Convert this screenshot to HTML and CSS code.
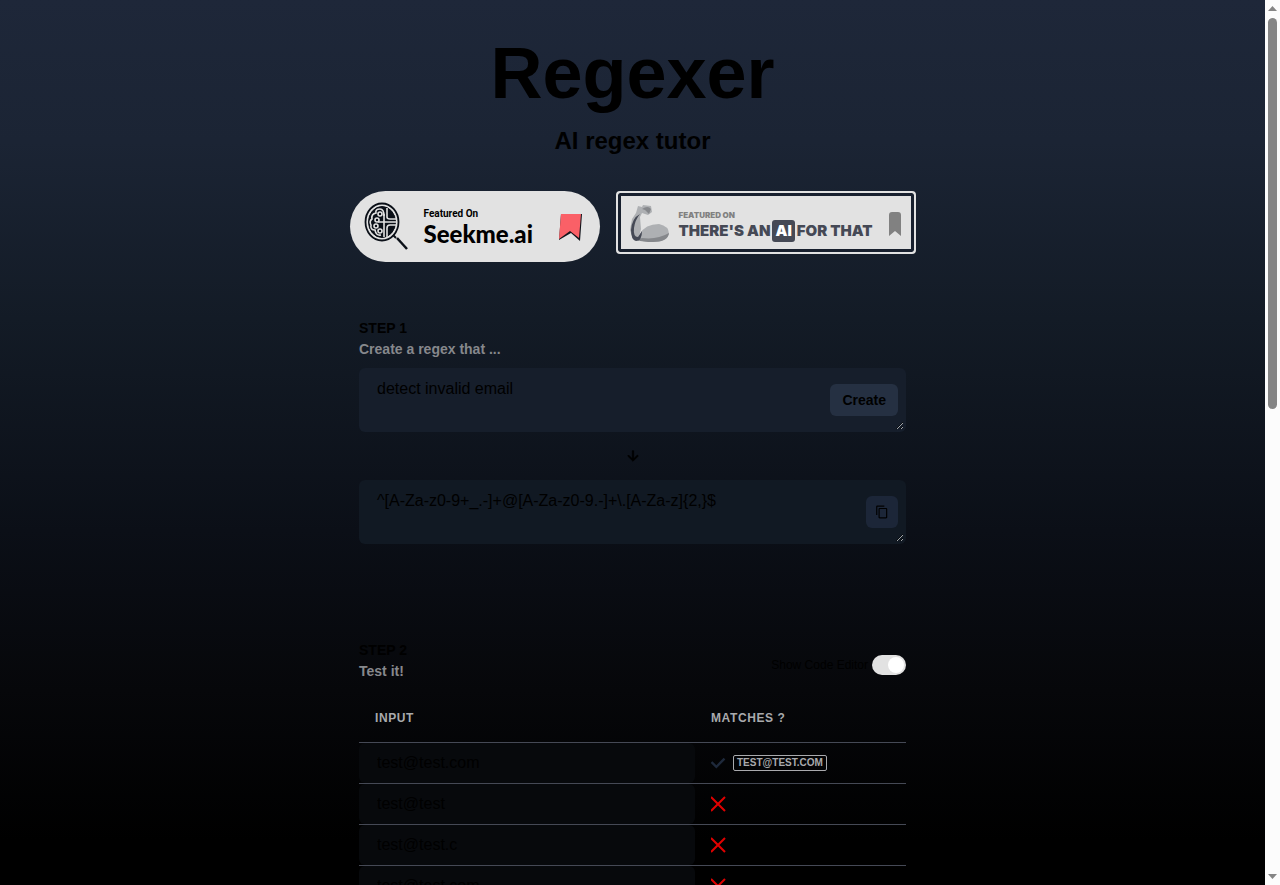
FILE: index.html
```html
<!DOCTYPE html>
<html lang="en">
<head>
<meta charset="utf-8">
<title>Regexer</title>
<meta name="viewport" content="width=device-width, initial-scale=1">
<link rel="stylesheet" href="styles.css">
</head>
<body>
<div class="page">
<header class="header">
    <h1>Regexer</h1>
    <h2>AI regex tutor</h2>
    <div class="badges">
        <a href="#seekme" class="badge-seekme">
            <svg class="magnifier" width="46" height="50" viewBox="0 0 46 50" fill="none" stroke="#0b1018">
                <ellipse cx="18" cy="20" rx="16.500" ry="18.500" stroke-width="1.800"/>
                <ellipse cx="18" cy="20" rx="13.500" ry="15.500" stroke-width="1" fill="#0b1018"/>
                <g stroke="#e2e2e2" stroke-width="1.600">
                    <path d="M20 12v23M23 6v9q0 2 3 2h6M23 35v-9q0-3 3-3h6M14 20h18"/>
                    <path d="M20 14q0-7-4-7-5 0-4 4-5 1-4 6-3 2-1 6-1 5 4 5 1 6 6 5"/>
                    <circle cx="16" cy="12" r="2"/>
                    <circle cx="13" cy="18" r="2"/>
                    <circle cx="12" cy="24" r="2"/>
                    <circle cx="16" cy="29" r="2"/>
                </g>
                <path d="M29 33l3 3" stroke-width="2"/>
                <path d="M33 36l10 11" stroke-width="2.500"/>
            </svg>
            <span class="badge-text">
                <small>Featured On</small>
                <b>Seekme.ai</b>
            </span>
            <svg width="24" height="28" viewBox="0 0 24 28">
                <path d="M3 1h21l-2 27-9-8-12 7z" fill="#12151c"/>
                <path d="M3 1h20l-2 24-9-7-11 8z" fill="#fa6067"/>
            </svg>
        </a>
        <a href="#taaft" class="badge-taaft">
            <svg class="arm" width="40" height="40" viewBox="0 0 40 40">
                <path d="M8 2l4 1 1-2 8 1 1 6-4 3-6-2-2 4 1 12-2 8-6 2-3-9 2-11 4-6z" fill="#aeb0b3"/>
                <path d="M12 5q6-4 9 0l-2 5-4-4z" fill="#85878b"/>
                <path d="M10 30q5-10 19-10 10 2 10 10-3 8-17 8-9 0-15-3z" fill="#aeb0b3"/>
                <path d="M12 34q15 2 27-5-1 9-16 9-10 0-16-2z" fill="#85878b"/>
                <path d="M10 10Q2 14 1 26q0 10 5 11 6 0 6-10l-4 6q-5 0-4-9 1-8 6-14z" fill="#454955"/>
            </svg>
            <span class="badge-text">
                <small>FEATURED ON</small>
                <b>THERE'S AN<i>AI</i>FOR THAT</b>
            </span>
            <svg width="12" height="24" viewBox="0 0 12 24">
                <path d="M0 3q0-3 3-3h6q3 0 3 3v21l-6-5-6 5z" fill="#818181"/>
            </svg>
        </a>
    </div>
</header>

<main class="content">
    <section class="step-create">
        <h3>STEP 1</h3>
        <label class="subtitle" for="prompt">Create a regex that ...</label>
        <div class="field">
            <textarea id="prompt" spellcheck="false">detect invalid email</textarea>
            <button type="button">Create</button>
        </div>
        <svg class="arrow" width="16" height="16" viewBox="0 0 24 24" fill="#000" stroke="#000">
            <path d="M20 12l-1.410-1.410L13 16.170V4h-2v12.170l-5.580-5.590L4 12l8 8 8-8z"/>
        </svg>
        <div class="field result">
            <textarea aria-label="Regex" spellcheck="false">^[A-Za-z0-9+_.-]+@[A-Za-z0-9.-]+\.[A-Za-z]{2,}$</textarea>
            <button type="button" class="copy" aria-label="Copy">
                <svg width="14" height="14" viewBox="0 0 24 24" fill="#000">
                    <path d="M16 1H4c-1.100 0-2 .9-2 2v14h2V3h12V1zm3 4H8c-1.100 0-2 .9-2 2v14c0 1.100.9 2 2 2h11c1.100 0 2-.9 2-2V7c0-1.100-.9-2-2-2zm0 16H8V7h11v14z"/>
                </svg>
            </button>
        </div>
    </section>

    <section class="step-test">
        <div class="step-head">
            <div>
                <h3>STEP 2</h3>
                <p class="subtitle">Test it!</p>
            </div>
            <div class="toggle">
                <label for="editor">Show Code Editor</label>
                <input type="checkbox" id="editor" checked>
            </div>
        </div>
        <table>
            <thead>
                <tr><th>INPUT</th><th>MATCHES ?</th></tr>
            </thead>
            <tbody id="tests"></tbody>
        </table>
    </section>
</main>
</div>

<div class="scrollbar" aria-hidden="true">
    <svg width="9" height="5" viewBox="0 0 9 5" fill="#858585"><path d="M0 5L4.500 0 9 5z"/></svg>
    <div class="track"><div class="thumb"></div></div>
    <svg width="9" height="5" viewBox="0 0 9 5" fill="#858585"><path d="M0 0l4.500 5L9 0z"/></svg>
</div>

<script>
    var tests = [
        { value: "test@test.com", match: "TEST@TEST.COM" },
        { value: "test@test" },
        { value: "test@test.c" },
        { value: "test@test,com" }
    ];

    var check = '<svg width="16" height="16" viewBox="0 0 24 24" fill="#1e293b"><path d="M8 15.200L2 9.200-.5 11.700 8 20.200 21.500 6.700 19 4.200z"/></svg>';
    var cross = '<svg width="16" height="16" viewBox="0 0 16 16" stroke="#e00000" stroke-width="2"><path d="M0 1l14 14M14 1L0 15"/></svg>';

    document.getElementById("tests").innerHTML = tests.map(function (t) {
        var result = t.match ? check + '<span class="tag">' + t.match + '</span>' : cross;
        return '<tr><td><input type="text" aria-label="Test input" value="' + t.value + '"></td>' +
            '<td><div class="result-cell">' + result + '</div></td></tr>';
    }).join("");
</script>
</body>
</html>
```
FILE: styles.css
```css
* { box-sizing: border-box; }
body { display: flex; height: 100vh; margin: 0; background: #000; font-family: "Liberation Sans", Arial, sans-serif; font-size: 16px; color: #000; }
h1, h2, h3, p { margin: 0; }
a { text-decoration: none; }
svg { display: block; flex: none; }

.page { flex: 1; min-width: 0; overflow-y: auto; background: linear-gradient(#1e2739, #1b2434 16vh, #131b26 36vh, #0b0f17 60vh, #06070a 78vh, #000 95vh); }
.header { padding-top: 37px; text-align: center; }
h1 { font-size: 72px; line-height: 72px; }
h2 { margin-top: 16px; font-size: 24px; line-height: 32px; }

.badges { display: flex; justify-content: center; align-items: flex-start; gap: 16px; margin-top: 34px; text-align: left; }
.badge-seekme { display: flex; align-items: center; width: 250px; height: 71px; padding: 0 18px 0 14px; border-radius: 36px; background: #e2e2e2; color: #000; }
.badge-text { flex: 1; }
.badge-text small, .badge-text b { display: block; white-space: nowrap; }
.badge-seekme .badge-text { padding-left: 14px; }
.badge-seekme small { font: bold 10px/14px Roboto, sans-serif; }
.badge-seekme b { font: 900 24px/26px Lato, sans-serif; }
.badge-taaft { display: flex; align-items: center; width: 300px; height: 63px; padding: 2px 13px 0 12px; border: 2px solid #e2e2e2; border-radius: 4px; background: #e2e2e2; box-shadow: inset 0 0 0 3px #18202e; color: #454955; }
.badge-taaft .badge-text { padding: 6px 0 0 9px; }
.badge-taaft small { font: 900 8px/9px Inter, sans-serif; color: #818181; }
.badge-taaft b { display: flex; align-items: center; font: 900 15px/22px Inter, sans-serif; }
.badge-taaft i { margin: 0 2px; padding: 0 3px; border-radius: 3px; background: #454955; font-style: normal; color: #fff; }

.content { width: 547px; max-width: 100%; margin: 56px auto 0; }
h3 { font-size: 14px; line-height: 21px; }
.subtitle { display: block; font-size: 14px; font-weight: bold; line-height: 21px; color: #86888c; }

.field { position: relative; margin-top: 8px; }
textarea { display: block; width: 100%; height: 64px; padding: 8px 16px; border: 2px solid transparent; border-radius: 6px; background: #161e2b; font: 16px/22px "Liberation Sans", Arial, sans-serif; color: #000; }
.result textarea { background: #111923; }
button { position: absolute; top: 16px; right: 8px; height: 32px; padding: 0 12px; border: 0; border-radius: 6px; background: #253042; font: bold 14px "Liberation Sans", Arial, sans-serif; color: #000; }
.copy { display: flex; align-items: center; justify-content: center; width: 32px; padding: 0; background: #1c2638; }
.arrow { margin: 16px auto; }
.result { margin-top: 0; }

.step-test { margin-top: 96px; }
.step-head { display: flex; align-items: flex-end; justify-content: space-between; }
.toggle { display: flex; align-items: center; gap: 4px; padding-bottom: 7px; font-size: 12px; }
.toggle input { appearance: none; width: 34px; height: 20px; margin: 0; padding: 2px; border-radius: 10px; background: #e2e2e2; }
.toggle input::before { content: ""; display: block; width: 16px; height: 16px; border-radius: 8px; background: #fff; }
.toggle input:checked::before { margin-left: 14px; }

table { width: 100%; margin-top: 11px; border-spacing: 0; table-layout: fixed; }
th { height: 50px; padding: 0 16px; border-bottom: 1px solid #454955; font-size: 12px; letter-spacing: 0.6px; text-align: left; color: #a9aaad; }
th:first-child { width: 336px; }
td { height: 41px; padding: 0 16px; border-bottom: 1px solid #454955; }
td:first-child { padding: 0; }
td input { display: block; width: 100%; height: 40px; padding: 0 16px; border: 2px solid transparent; border-radius: 6px; background: #07090c; font: 16px "Liberation Sans", Arial, sans-serif; color: #000; }
.result-cell { display: flex; align-items: center; gap: 6px; }
.tag { padding: 0 3px; border: 1px solid #a9aaad; border-radius: 2px; font-size: 10px; font-weight: bold; line-height: 14px; color: #a9aaad; }

.scrollbar { display: flex; flex-direction: column; align-items: center; flex: none; width: 15px; padding: 6px 0; background: #fcfcfc; }
.track { flex: 1; padding: 7px 0; }
.thumb { width: 9px; height: 46%; border-radius: 5px; background: #858585; }
```
